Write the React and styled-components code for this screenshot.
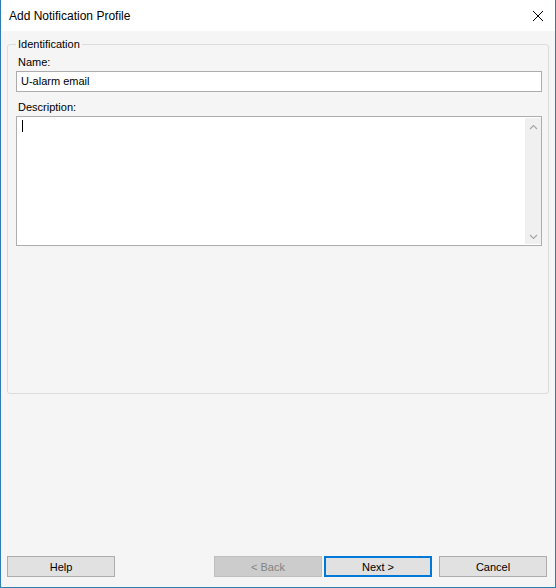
import React from "react";
import styled, { createGlobalStyle } from "styled-components";

const Global = createGlobalStyle`
  html, body { margin: 0; padding: 0; background: #f0f0f0; }
  body { font-family: "Liberation Sans", Arial, sans-serif; }
  * { box-sizing: border-box; }
`;

const Window = styled.div`
  width: 556px;
  height: 588px;
  display: flex;
  flex-direction: column;
  background: #f5f5f5;
  border: 1px solid #2b7eae;
  border-top: none;
`;

const TitleBar = styled.div`
  height: 31px;
  background: #ffffff;
  display: flex;
  align-items: center;
  justify-content: space-between;
  padding: 0 10px 0 8px;
  font-size: 12px;
  color: #000;
`;

const CloseIcon = styled.svg`
  width: 12px;
  height: 12px;
  margin-right: 1px;
`;

const Body = styled.div`
  flex: 1;
  display: flex;
  flex-direction: column;
  padding: 7px 6px 10px 6px;
`;

const Group = styled.fieldset`
  margin: 0;
  height: 356px;
  border: 1px solid #dcdcdc;
  border-radius: 3px;
  padding: 2px 6px 0 8px;
  display: flex;
  flex-direction: column;
`;

const Legend = styled.legend`
  font-size: 11px;
  padding: 0 2px;
  margin-left: 0px;
  color: #000;
`;

const Label = styled.div`
  font-size: 11px;
  color: #000;
  margin: ${p => p.$top || 0}px 0 2px 2px;
  line-height: 13px;
`;

const TextInput = styled.div`
  height: 21px;
  background: #fff;
  border: 1px solid #adadad;
  font-size: 11px;
  padding: 3px 4px;
  line-height: 13px;
`;

const TextArea = styled.div`
  height: 130px;
  background: #fff;
  border: 1px solid #adadad;
  display: flex;
`;

const TextContent = styled.div`
  flex: 1;
  padding: 3px 5px;
`;

const Caret = styled.div`
  width: 1px;
  height: 12px;
  background: #000;
`;

const Scrollbar = styled.div`
  width: 16px;
  margin: 1px 0 1px 0;
  background: #f0f0f0;
  display: flex;
  flex-direction: column;
  justify-content: space-between;
  align-items: center;
  padding: 6px 0 4px;
`;

const Arrow = styled.svg`
  width: 9px;
  height: 6px;
`;

const Spacer = styled.div`
  flex: 1;
`;

const ButtonRow = styled.div`
  display: flex;
  align-items: center;
`;

const Button = styled.div`
  width: 108px;
  height: 21px;
  display: flex;
  align-items: center;
  justify-content: center;
  font-size: 11px;
  background: ${p => (p.$disabled ? "#cccccc" : "#e1e1e1")};
  color: ${p => (p.$disabled ? "#838383" : "#000")};
  border: ${p => (p.$primary ? "2px solid #0078d7" : p.$disabled ? "1px solid #bfbfbf" : "1px solid #adadad")};
  margin-left: ${p => p.$ml || 0}px;
`;

export default function App() {
  return (
    <>
      <Global />
      <Window>
        <TitleBar>
          <span>Add Notification Profile</span>
          <CloseIcon viewBox="0 0 12 12">
            <path d="M1 1 L11 11 M11 1 L1 11" stroke="#000" strokeWidth="1" />
          </CloseIcon>
        </TitleBar>
        <Body>
          <Group>
            <Legend>Identification</Legend>
            <Label $top={4}>Name:</Label>
            <TextInput>U-alarm email</TextInput>
            <Label $top={9}>Description:</Label>
            <TextArea>
              <TextContent>
                <Caret />
              </TextContent>
              <Scrollbar>
                <Arrow viewBox="0 0 9 6">
                  <path d="M1 5 L4.5 1.5 L8 5" stroke="#a6a6a6" fill="none" strokeWidth="1.2" />
                </Arrow>
                <Arrow viewBox="0 0 9 6">
                  <path d="M1 1 L4.5 4.5 L8 1" stroke="#a6a6a6" fill="none" strokeWidth="1.2" />
                </Arrow>
              </Scrollbar>
            </TextArea>
          </Group>
          <Spacer />
          <ButtonRow>
            <Button>Help</Button>
            <Button $ml={99} $disabled>&lt; Back</Button>
            <Button $ml={2} $primary>Next &gt;</Button>
            <Button $ml={7}>Cancel</Button>
          </ButtonRow>
        </Body>
      </Window>
    </>
  );
}
